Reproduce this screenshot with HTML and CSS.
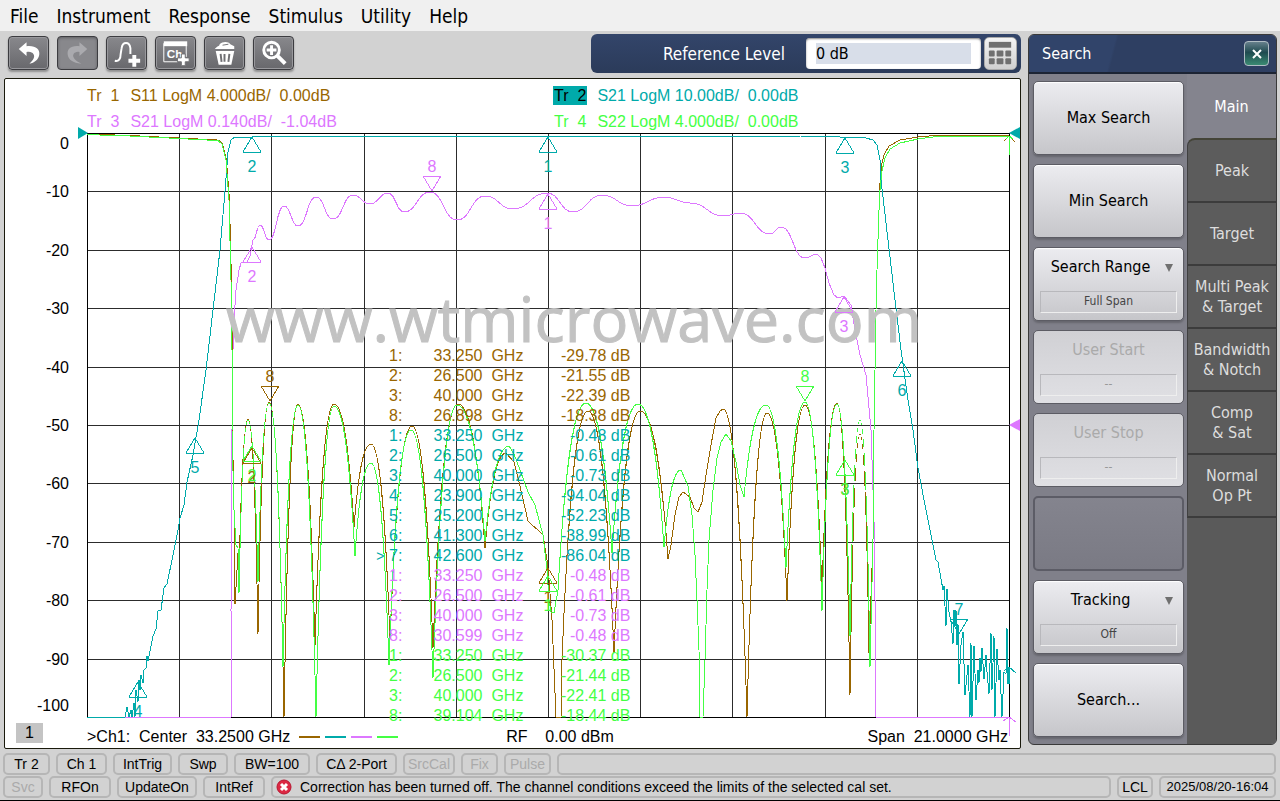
FILE: index.html
```html
<!DOCTYPE html>
<html lang="en">
<head>
    <meta charset="UTF-8">
    <meta name="viewport" content="width=device-width, initial-scale=1.0">
    <title>Network Analyzer</title>
    <link rel="stylesheet" href="styles.css">
</head>
<body>

    <nav class="menu">
        <a href="#">File</a>
        <a href="#">Instrument</a>
        <a href="#">Response</a>
        <a href="#">Stimulus</a>
        <a href="#">Utility</a>
        <a href="#">Help</a>
    </nav>

    <div class="main">
        <div class="left">
            <div class="toolbar">
                <button class="tool" aria-label="Undo">
                    <svg viewBox="0 0 40 32"><path d="M10 12L18 5V9C27 8 32 12 31 18C30 23 26 26 21 27C25 23 27 20 25 17C24 15 21 14 18 15V19Z" fill="#fff"/></svg>
                </button>
                <button class="tool off" aria-label="Redo" disabled>
                    <svg viewBox="0 0 40 32"><path d="M30 12L22 5V9C13 8 9 12 10 18C11 23 15 26 24 27C18 24 14 20 16 17C17 15 20 14 22 15V19Z" fill="#aaaaae"/></svg>
                </button>
                <button class="tool" aria-label="Add trace">
                    <svg viewBox="0 0 40 32"><path d="M8 24C12 25 14 22 14 17L15 11C16 4 23 4 24 11V17" fill="none" stroke="#fff" stroke-width="2"/><path d="M26 18H30V22H34V26H30V30H26V26H22V22H26Z" fill="#fff"/></svg>
                </button>
                <button class="tool" aria-label="Add channel">
                    <svg viewBox="0 0 40 32"><path d="M31 6V20M22 25H8V6" fill="none" stroke="#fff" stroke-width="1"/><path d="M8 4H32V9H8Z" fill="#fff"/><text x="11" y="21" class="ch">Ch</text><path d="M26 17H30V21H34V25H30V29H26V25H22V21H26Z" fill="#fff" stroke="#707074" stroke-width="1"/></svg>
                </button>
                <button class="tool" aria-label="Delete">
                    <svg viewBox="0 0 40 32"><path d="M10 12C12 9 15 9 15 7C18 4 24 4 26 7L30 9V12Z" fill="#fff"/><path d="M18 8L24 7" stroke="#707074" stroke-width="1"/><path d="M11 14H30L27 28H14Z" fill="#fff"/><path d="M16 17L17 25M20 17V25M25 17L24 25" stroke="#707074" stroke-width="2"/></svg>
                </button>
                <button class="tool" aria-label="Zoom">
                    <svg viewBox="0 0 40 32"><circle cx="18" cy="13" r="8" fill="none" stroke="#fff" stroke-width="3"/><path d="M18 8V18M13 13H23" stroke="#fff" stroke-width="3"/><path d="M24 19L32 27" stroke="#fff" stroke-width="4"/></svg>
                </button>

                <div class="entry">
                    <label for="refLevel">Reference Level</label>
                    <div class="entry-box"><input type="text" id="refLevel" value="0 dB"></div>
                    <button class="keypad" aria-label="Keypad">
                        <svg viewBox="0 0 32 32"><g fill="#707070"><rect x="4" y="4" width="23" height="6"/><rect x="4" y="13" width="6" height="6" rx="1"/><rect x="12" y="13" width="7" height="6" rx="1"/><rect x="21" y="13" width="6" height="6" rx="1"/><rect x="4" y="21" width="6" height="6" rx="1"/><rect x="12" y="21" width="7" height="6" rx="1"/><rect x="21" y="21" width="6" height="6" rx="1"/></g></svg>
                    </button>
                </div>
            </div>

            <div class="screen">
                <div class="traces">
                    <div class="tr1"><span>Tr&nbsp; 1</span> S11 LogM 4.000dB/&nbsp; 0.00dB</div>
                    <div class="tr2"><span><b>Tr&nbsp; 2</b></span> S21 LogM 10.00dB/&nbsp; 0.00dB</div>
                    <div class="tr3"><span>Tr&nbsp; 3</span> S21 LogM 0.140dB/&nbsp; -1.04dB</div>
                    <div class="tr4"><span>Tr&nbsp; 4</span> S22 LogM 4.000dB/&nbsp; 0.00dB</div>
                </div>

                <div class="plot">
                    <svg id="plot" viewBox="5 128 1015 596">
                        <g id="axis" class="axis"></g>
                        <path id="grid" class="grid"/>
                        <path class="frame" d="M87 133H1009V717H87Z"/>
                        <path id="t1" class="line s1"/>
                        <path id="t3" class="line s3"/>
                        <path id="t2" class="line s2"/>
                        <path id="t4" class="line s4"/>
                        <text class="watermark" x="226" y="342">www.wtmicrowave.com</text>
                        <g id="markers"></g>

                        <!-- reference level pointers -->
                        <path class="f2" d="M78 127L88 133L78 139Z"/>
                        <path class="f2" d="M1009 133L1020 127V139Z"/>
                        <path class="f3" d="M1009 425L1020 419V431Z"/>
                        <path class="line s1" d="M1004 141L1009 136L1015 142"/>
                        <path class="line s4" d="M1009 155V136M1006 139L1009 136L1013 139"/>
                        <path class="line s2" d="M1004 671L1009 667L1016 673M1009 667V684"/>
                        <path class="line s3" d="M1003 721L1009 717L1016 722M1009 717V736"/>
                    </svg>
                    <table class="readout" id="readout"></table>
                </div>

                <div class="stimulus">
                    <span class="chnum">1</span>
                    <span class="start">&gt;Ch1:&nbsp; Center&nbsp; 33.2500 GHz</span>
                    <span class="legend"><i class="b1"></i><i class="b2"></i><i class="b3"></i><i class="b4"></i></span>
                    <span class="power">RF&nbsp;&nbsp;&nbsp; 0.00 dBm</span>
                    <span class="span">Span&nbsp; 21.0000 GHz</span>
                </div>
            </div>
        </div>

        <div class="panel">
            <div class="panel-head">
                <h2>Search</h2>
                <button class="close" aria-label="Close"><svg viewBox="0 0 10 10"><path d="M1 1L9 9M9 1L1 9" stroke="#fff" stroke-width="2"/></svg></button>
            </div>
            <div class="panel-body">
                <div class="keys">
                    <button class="key">Max Search</button>
                    <button class="key">Min Search</button>
                    <button class="key drop"><span>Search Range</span><small>Full Span</small></button>
                    <button class="key val" disabled><span>User Start</span><small>--</small></button>
                    <button class="key val" disabled><span>User Stop</span><small>--</small></button>
                    <div class="key empty"></div>
                    <button class="key drop"><span>Tracking</span><small>Off</small></button>
                    <button class="key">Search...</button>
                </div>
                <div class="tabs">
                    <button class="tab active">Main</button>
                    <button class="tab first">Peak</button>
                    <button class="tab">Target</button>
                    <button class="tab">Multi Peak<br>&amp; Target</button>
                    <button class="tab">Bandwidth<br>&amp; Notch</button>
                    <button class="tab">Comp<br>&amp; Sat</button>
                    <button class="tab">Normal<br>Op Pt</button>
                </div>
            </div>
        </div>
    </div>

    <footer class="status">
        <div class="row row1">
            <button>Tr 2</button>
            <button>Ch 1</button>
            <button>IntTrig</button>
            <button>Swp</button>
            <button>BW=100</button>
            <button>C&Delta; 2-Port</button>
            <button disabled>SrcCal</button>
            <button disabled>Fix</button>
            <button disabled>Pulse</button>
            <div class="cell"></div>
        </div>
        <div class="row row2">
            <button disabled>Svc</button>
            <button>RFOn</button>
            <button>UpdateOn</button>
            <button>IntRef</button>
            <div class="cell message">
                <svg viewBox="0 0 16 16"><circle cx="8" cy="8" r="7" fill="#dc2843" stroke="#b81530"/><path d="M5 5L11 11M11 5L5 11" stroke="#fff" stroke-width="3"/></svg>
                Correction has been turned off. The channel conditions exceed the limits of the selected cal set.
            </div>
            <div class="cell">LCL</div>
            <div class="cell date">2025/08/20-16:04</div>
        </div>
    </footer>

    <script src="script.js"></script>
</body>
</html>
```

FILE: styles.css
```css
* { box-sizing: border-box; }
body { margin: 0; min-height: 100vh; display: flex; flex-direction: column; background: #d2d2d2; border-bottom: 1px solid #000; font-family: "DejaVu Sans Condensed", "Noto Sans", sans-serif; font-size: 16px; color: #000; }
button { font-family: inherit; padding: 0; cursor: pointer; }

.menu { display: flex; gap: 18px; height: 31px; padding-left: 10px; align-items: center; background: #f0f0f0; font-size: 19px; }
.menu a { color: #000; text-decoration: none; }

.main { flex: 1; display: grid; grid-template-columns: 1fr 249px; gap: 7px; padding: 0 3px 4px 4px; }
.left { display: flex; flex-direction: column; min-width: 0; }

/* toolbar */
.toolbar { display: flex; gap: 8px; height: 47px; padding: 5px 1px 0 4px; align-items: flex-start; }
.tool { width: 41px; height: 34px; border: 1px solid #3c3c40; border-radius: 4px; background: linear-gradient(#88888c, #68686c); box-shadow: inset 0 0 0 1px #98989c, 0 2px 2px #909090; }
.tool svg { display: block; width: 100%; height: 100%; }
.tool.off { background: #88888c; box-shadow: inset 0 1px 3px #606064; }
.ch { font: bold 12px "Liberation Sans", sans-serif; fill: #fff; }
.entry { display: flex; align-items: center; justify-content: flex-end; width: 430px; height: 39px; margin: -2px -1px 0 auto; padding: 0 4px; border-radius: 6px; background: linear-gradient(#33456a, #2b3b5a); color: #fff; font-size: 17px; }
.entry-box { width: 175px; height: 31px; margin: 0 3px 0 21px; padding: 5px 10px; background: #fff; border-radius: 4px; box-shadow: inset 0 1px 2px #888; }
.entry input { display: block; width: 100%; height: 21px; border: 0; padding: 0; background: #d8dee9; font-family: inherit; font-size: 16px; }
.keypad { width: 33px; height: 33px; border: 1px solid #aaa; border-radius: 5px; background: linear-gradient(#f4f4f4, #d0d0d0); }
.keypad svg { display: block; width: 100%; }

/* screen */
.screen { flex: 1; background: #fff; border: 1px solid #1a1a0c; border-radius: 2px; font-family: "Liberation Sans", Arial, sans-serif; }
.traces { display: grid; grid-template-columns: 467px 1fr; height: 49px; padding: 4px 0 0 82px; line-height: 26px; white-space: nowrap; }
.traces span { display: inline-block; width: 39px; }
.traces b { font-weight: normal; display: inline-block; line-height: 19px; margin-left: -1px; padding: 0 1px; background: #00aaaa; color: #000; }
.tr1 { color: #996600; }
.tr2 { color: #00aaaa; }
.tr3 { color: #dd77ff; }
.tr4 { color: #44ff44; }

.plot { position: relative; }
.plot svg { display: block; width: 100%; overflow: visible; }
.axis, .mark { font-size: 16px; }
.axis { text-anchor: end; }
.mark { text-anchor: middle; }
.grid, .frame, .line { fill: none; stroke-width: 1px; shape-rendering: crispEdges; }
.grid { stroke: #2c2c2c; }
.frame { stroke: #000; }
.line { stroke-linejoin: bevel; }
.s1 { stroke: #996600; }
.s2 { stroke: #00aaaa; }
.s3 { stroke: #dd77ff; }
.s4 { stroke: #44ff44; }
.f1 { fill: #996600; }
.f2 { fill: #00aaaa; }
.f3 { fill: #dd77ff; }
.f4 { fill: #44ff44; }
.watermark { font-family: "Open Sans", "Noto Sans", sans-serif; font-size: 63px; fill: #c2c2c2; stroke: #c2c2c2; stroke-width: 1px; }

/* marker table lies over the traces */
.readout { position: absolute; left: 36%; top: 218px; border-collapse: collapse; line-height: 20px; white-space: pre; }
.readout td { padding: 0; }
.readout .cur { width: 14px; font-size: 14px; text-align: right; }
.readout .num { width: 18px; text-align: right; }
.readout .freq { width: 121px; text-align: right; }
.readout .amp { width: 107px; text-align: right; }

.stimulus { display: flex; align-items: center; height: 24px; padding: 1px 12px 0 11px; white-space: pre; }
.chnum { width: 27px; height: 20px; margin: -7px 44px 0 0; background: #c4c4c4; text-align: center; line-height: 20px; }
.legend { display: flex; gap: 5px; margin: 0 108px 0 9px; }
.legend i { width: 21px; height: 2px; }
.b1 { background: #996600; }
.b2 { background: #00aaaa; }
.b3 { background: #dd77ff; }
.b4 { background: #44ff44; }
.span { margin-left: auto; }

/* search panel */
.panel { display: flex; flex-direction: column; margin-top: 3px; margin-bottom: 4px; border: 1px solid #3a3a3a; border-radius: 6px; background: #80808a; overflow: hidden; }
.panel-head { display: flex; align-items: center; justify-content: space-between; height: 39px; padding: 0 7px 0 13px; border-bottom: 2px solid #1c2434; background: linear-gradient(105deg, #31446a 34%, #2e3f62 35%); color: #fff; }
.panel-head h2 { margin: 0; font-size: 16px; font-weight: normal; }
.close { width: 25px; height: 25px; border: 1px solid #b0bcc4; border-radius: 4px; background: linear-gradient(#66808c, #1f4a50 45%, #3a8a72); }
.close svg { display: block; width: 10px; margin: auto; }
.panel-body { flex: 1; display: grid; grid-template-columns: 158px 1fr; }
.keys { display: flex; flex-direction: column; gap: 9px; padding: 7px 3px 6px 4px; }
.key { display: block; width: 151px; height: 74px; padding-bottom: 2px; border: 1px solid #5c5c64; border-radius: 5px; background: linear-gradient(#ececf0, #c6c6ca); box-shadow: inset 0 1px 1px #fff, 0 2px 2px #66666e; font-size: 16px; color: #000; }
.key span { display: block; height: 22px; line-height: 22px; }
.key.drop, .key.val { padding-bottom: 0; }
.key.drop span { padding-right: 30px; position: relative; padding-left: 14px; }
.key.drop span::after { content: ""; position: absolute; right: 10px; top: 8px; border: 4px solid transparent; border-top: 8px solid #707070; border-bottom: 0; }
.key small { display: block; height: 22px; margin: 13px 6px 0; border: 1px solid #b8b8bc; border-right-color: #eee; border-bottom-color: #eee; font: 12px/18px "DejaVu Sans Condensed", sans-serif; color: #444; }
.key:disabled { color: #aaa; background: linear-gradient(#d0d0d4, #e0e0e4); box-shadow: none; }
.key:disabled small { color: #999; }
.key.empty { height: 75px; background: linear-gradient(#84848e, #7a7a84); border: 2px solid #5c5c66; box-shadow: none; }

.tabs { display: flex; flex-direction: column; background: linear-gradient(#84848e 80px, #5a5a5a 80px); }
.tab { height: 63px; border: 0; border-left: 1px solid #404040; border-bottom: 2px solid #3c3c3c; background: #5c5c5c; color: #ddd; font-size: 16px; line-height: 20px; }
.tab.active { height: 64px; padding-top: 2px; background: #84848e; border: 0; color: #fff; }
.tab.first { height: 65px; border-top: 2px solid #444438; border-top-left-radius: 8px; }

/* status bar */
.status { padding: 0 4px 1px 3px; font: 14px "Liberation Sans", Arial, sans-serif; }
.row { display: grid; gap: 6px; height: 23px; }
.row1 { grid-template-columns: 47px 51px 59px 50px 76px 81px 52px 37px 47px 1fr; }
.row2 { grid-template-columns: 40px 62px 80px 62px 1fr 36px 117px; }
.row button, .cell { height: 22px; padding: 0; border: 2px solid #b6b6b6; border-radius: 5px; background: #d2d2d2; color: #000; font-size: 14px; line-height: 18px; text-align: center; white-space: nowrap; }
.row button:disabled { color: #aaa; }
.row .message { display: flex; align-items: center; gap: 8px; padding-left: 3px; text-align: left; }
.message svg { width: 16px; height: 16px; }
.row .date { font-size: 13px; }
```

FILE: script.js
```js
var svgNS = "http://www.w3.org/2000/svg";

function add(parent, tag, attrs, text) {
    var el = document.createElementNS(svgNS, tag);
    for (var k in attrs) el.setAttribute(k, attrs[k]);
    if (text !== undefined) el.textContent = text;
    document.getElementById(parent).appendChild(el);
}

// grid and axis labels
var d = "";
for (var i = 1; i < 10; i++) {
    d += "M" + Math.round(87 + i * 92.2) + " 133V717M87 " + Math.round(133 + i * 58.4) + "H1009";
}
document.getElementById("grid").setAttribute("d", d);
for (i = 0; i <= 10; i++) {
    var y = Math.round(133 + i * 58.4) + 6;
    if (i === 0) y = 149;
    if (i === 10) y = 711;
    add("axis", "text", { x: 69, y: y }, String(-10 * i));
}

// straight segments
function poly(p) {
    return p.map(function (a) { return "L" + a[0] + " " + a[1]; }).join("");
}

// null, peak, null, peak ... with sharp nulls and round peaks
function lobes(p) {
    var s = "";
    for (var i = 1; i < p.length; i++) {
        var a = p[i - 1], b = p[i], up = b[1] < a[1];
        var n = up ? a : b, k = up ? b : a;
        var c1 = [n[0] + (k[0] - n[0]) * 0.25, n[1] + (k[1] - n[1]) * 0.65];
        var c2 = [n[0] + (k[0] - n[0]) * 0.55, k[1]];
        var c = up ? [c1, c2] : [c2, c1];
        s += "C" + c[0] + " " + c[1] + " " + b[0] + " " + b[1];
    }
    return s.replace(/,/g, " ");
}

// rounded at both ends
function wave(p) {
    var s = "";
    for (var i = 1; i < p.length; i++) {
        var m = (p[i - 1][0] + p[i][0]) / 2;
        s += "C" + [m, p[i - 1][1], m, p[i][1], p[i][0], p[i][1]].join(" ");
    }
    return s;
}

function draw(id, path) {
    document.getElementById(id).setAttribute("d", "M" + path.slice(1));
}

var edge = [[87, 134.6], [130, 136], [180, 138.6], [218, 140.6], [222, 144], [226, 160], [229, 200], [231, 280], [232, 350], [232, 430]];
var edge1 = edge.map(function (p) { return [p[0] + 0.4, p[1] - 0.5]; });

draw("t1", poly(edge1.concat([[234, 510], [235, 604], [238, 553], [239, 575]])) +
    lobes([[239, 575], [248, 419], [258, 634], [269, 402], [284, 717], [298, 404], [315, 646], [334, 404],
        [354, 527], [371, 444], [390, 640], [412, 426], [433, 648], [458, 404], [485, 548], [506, 453]]) +
    poly([[514, 462], [519, 482], [528, 521], [532, 525], [538, 530], [543, 535], [547, 560], [549, 580], [552, 620], [556, 717], [561, 717], [562, 660]]) +
    lobes([[562, 660], [588, 411], [614, 653], [640, 411], [668, 559]]) +
    poly([[671, 545], [675, 515], [679, 497], [683, 492], [690, 497], [694, 508], [698, 512], [702, 502], [706, 475], [711, 445], [716, 418], [720, 411], [723, 409]]) +
    lobes([[723, 409], [747, 717], [767, 413], [787, 601], [805, 405], [822, 591], [837, 403], [850, 695], [860, 434], [869, 653]]) +
    poly([[873, 540], [874, 430], [875, 370], [876, 310], [877, 270], [879, 210], [880, 183], [882, 163], [884, 155], [889, 146], [900, 140], [918, 137], [940, 135], [1009, 135]]));

draw("t4", poly(edge.concat([[234, 510], [236, 545], [238, 548], [239, 593]])) +
    lobes([[239, 593], [248, 420], [258, 582], [269, 403], [283, 667], [298, 405], [316, 717], [334, 406],
        [355, 556], [371, 463], [389, 665], [411, 430], [433, 678], [457, 405], [485, 541]]) +
    lobes([[485, 541], [509, 446]]) +
    poly([[514, 454], [520, 470], [528, 492], [535, 505], [543, 535], [547, 570], [549, 600], [551, 612], [554, 613], [558, 590]]) +
    lobes([[558, 590], [586, 403], [612, 553], [638, 404], [664, 547], [681, 470]]) +
    poly([[688, 486], [692, 515], [695, 555], [697, 600], [699, 650], [700, 717], [703, 717], [705, 660], [707, 590], [709, 540], [713, 490], [717, 458]]) +
    poly([[721, 442], [726, 434], [731, 441], [736, 462], [740, 485], [744, 497]]) +
    lobes([[744, 497], [766, 405], [786, 568], [805, 402], [822, 611], [837, 404], [850, 636], [860, 420], [870, 667]]) +
    poly([[873, 540], [874, 430], [875, 370], [876, 310], [877, 270], [879, 210], [880, 190], [882, 171], [885, 158], [890, 149], [900, 143], [918, 139], [940, 136], [1009, 136]]));

draw("t2", poly([[87, 717], [125, 717], [127, 707], [129, 717], [131, 710], [132, 717], [134, 703], [135, 717], [136, 690], [138, 702],
    [139, 680], [140, 690], [141, 675], [143, 683], [144, 670], [146, 668], [147, 656], [148, 661], [153, 636], [156, 629], [158, 611], [161, 610],
    [164, 588], [167, 584], [172, 560], [178, 530], [180, 518], [184, 505], [187, 482], [193, 455], [199, 420], [206, 370],
    [213, 310], [220, 250], [225, 191], [228, 152], [231, 140], [235, 137], [252, 137], [253, 136], [800, 136], [840, 137],
    [866, 138], [873, 140], [877, 145], [880, 160], [881, 180], [888, 240], [895, 300], [901, 350], [908, 400], [913, 430],
    [918, 468], [924, 500], [932, 540], [936, 560], [938, 562], [943, 590], [944, 586], [946, 626], [947, 589], [949, 612], [951, 622],
    [953, 644], [954, 610], [955, 626], [956, 610], [957, 645], [958, 624], [959, 684], [961, 645], [963, 632], [965, 695], [968, 665],
    [970, 717], [971, 643], [972, 717], [974, 646], [976, 700], [978, 670], [979, 683], [980, 658], [981, 672], [982, 648], [984, 679],
    [986, 655], [987, 672], [989, 694], [991, 633], [992, 690], [994, 636], [995, 717], [997, 649], [999, 680], [1000, 670],
    [1002, 717], [1004, 672], [1006, 674], [1007, 628], [1008, 684], [1009, 667]]));

draw("t3", poly([[125, 717], [231, 717], [231, 611], [232, 430], [233, 350], [234, 320], [236, 290], [239, 270], [241, 263], [247, 262], [250, 256], [253, 240]]) +
    wave([[253, 240], [260, 225], [269, 240], [284, 206], [298, 226], [316, 197], [333, 219], [353, 195], [370, 204], [388, 193],
        [404, 212], [430, 192], [457, 220], [485, 196], [513, 209], [547, 193], [573, 212], [602, 195], [632, 206], [664, 197],
        [690, 203], [724, 216], [740, 213], [770, 234], [781, 227], [805, 258], [817, 254]]) +
    poly([[821, 258], [825, 268], [829, 283], [834, 295], [838, 298], [844, 296], [851, 305], [855, 330], [860, 355], [866, 375], [871, 430], [874, 520], [875, 600], [876, 717], [1009, 717]]));

// markers: trace, number, tip x, tip y, pointing down
var markers = [
    [2, 2, 252, 137], [2, 1, 548, 137], [2, 3, 845, 138], [2, 5, 195, 438], [2, 4, 138, 682], [2, 6, 902, 361], [2, 7, 959, 634, true],
    [3, 2, 252, 247], [3, 8, 432, 191, true], [3, 1, 548, 194], [3, 3, 844, 297],
    [1, 8, 270, 401, true], [1, 2, 252, 448], [1, 1, 548, 568], [1, 3, 845, 460],
    [4, 2, 252, 446], [4, 1, 548, 576], [4, 3, 845, 460], [4, 8, 805, 401, true]
];
markers.forEach(function (m) {
    var x = m[2], y = m[3], base = m[4] ? y - 15 : y + 15;
    add("markers", "path", { "class": "line s" + m[0], d: "M" + x + " " + y + "L" + (x - 9) + " " + base + "H" + (x + 9) + "Z" });
    add("markers", "text", { "class": "mark f" + m[0], x: x, y: m[4] ? base - 4 : base + 20 }, m[1]);
});

// marker readout
var rows = [
    [1, 1, "33.250", "-29.78"], [1, 2, "26.500", "-21.55"], [1, 3, "40.000", "-22.39"], [1, 8, "26.898", "-18.38"],
    [2, 1, "33.250", "-0.48"], [2, 2, "26.500", "-0.61"], [2, 3, "40.000", "-0.73"], [2, 4, "23.900", "-94.04"],
    [2, 5, "25.200", "-52.23"], [2, 6, "41.300", "-38.99"], [2, 7, "42.600", "-86.04"],
    [3, 1, "33.250", "-0.48"], [3, 2, "26.500", "-0.61"], [3, 3, "40.000", "-0.73"], [3, 8, "30.599", "-0.48"],
    [4, 1, "33.250", "-30.37"], [4, 2, "26.500", "-21.44"], [4, 3, "40.000", "-22.41"], [4, 8, "39.104", "-18.44"]
];
document.getElementById("readout").innerHTML = rows.map(function (r) {
    return '<tr class="tr' + r[0] + '"><td class="cur">' + (r[1] === 7 ? "&gt;" : "") + '</td><td class="num">' + r[1] +
        ':</td><td class="freq">' + r[2] + '  GHz</td><td class="amp">' + r[3] + " dB</td></tr>";
}).join("");
```
